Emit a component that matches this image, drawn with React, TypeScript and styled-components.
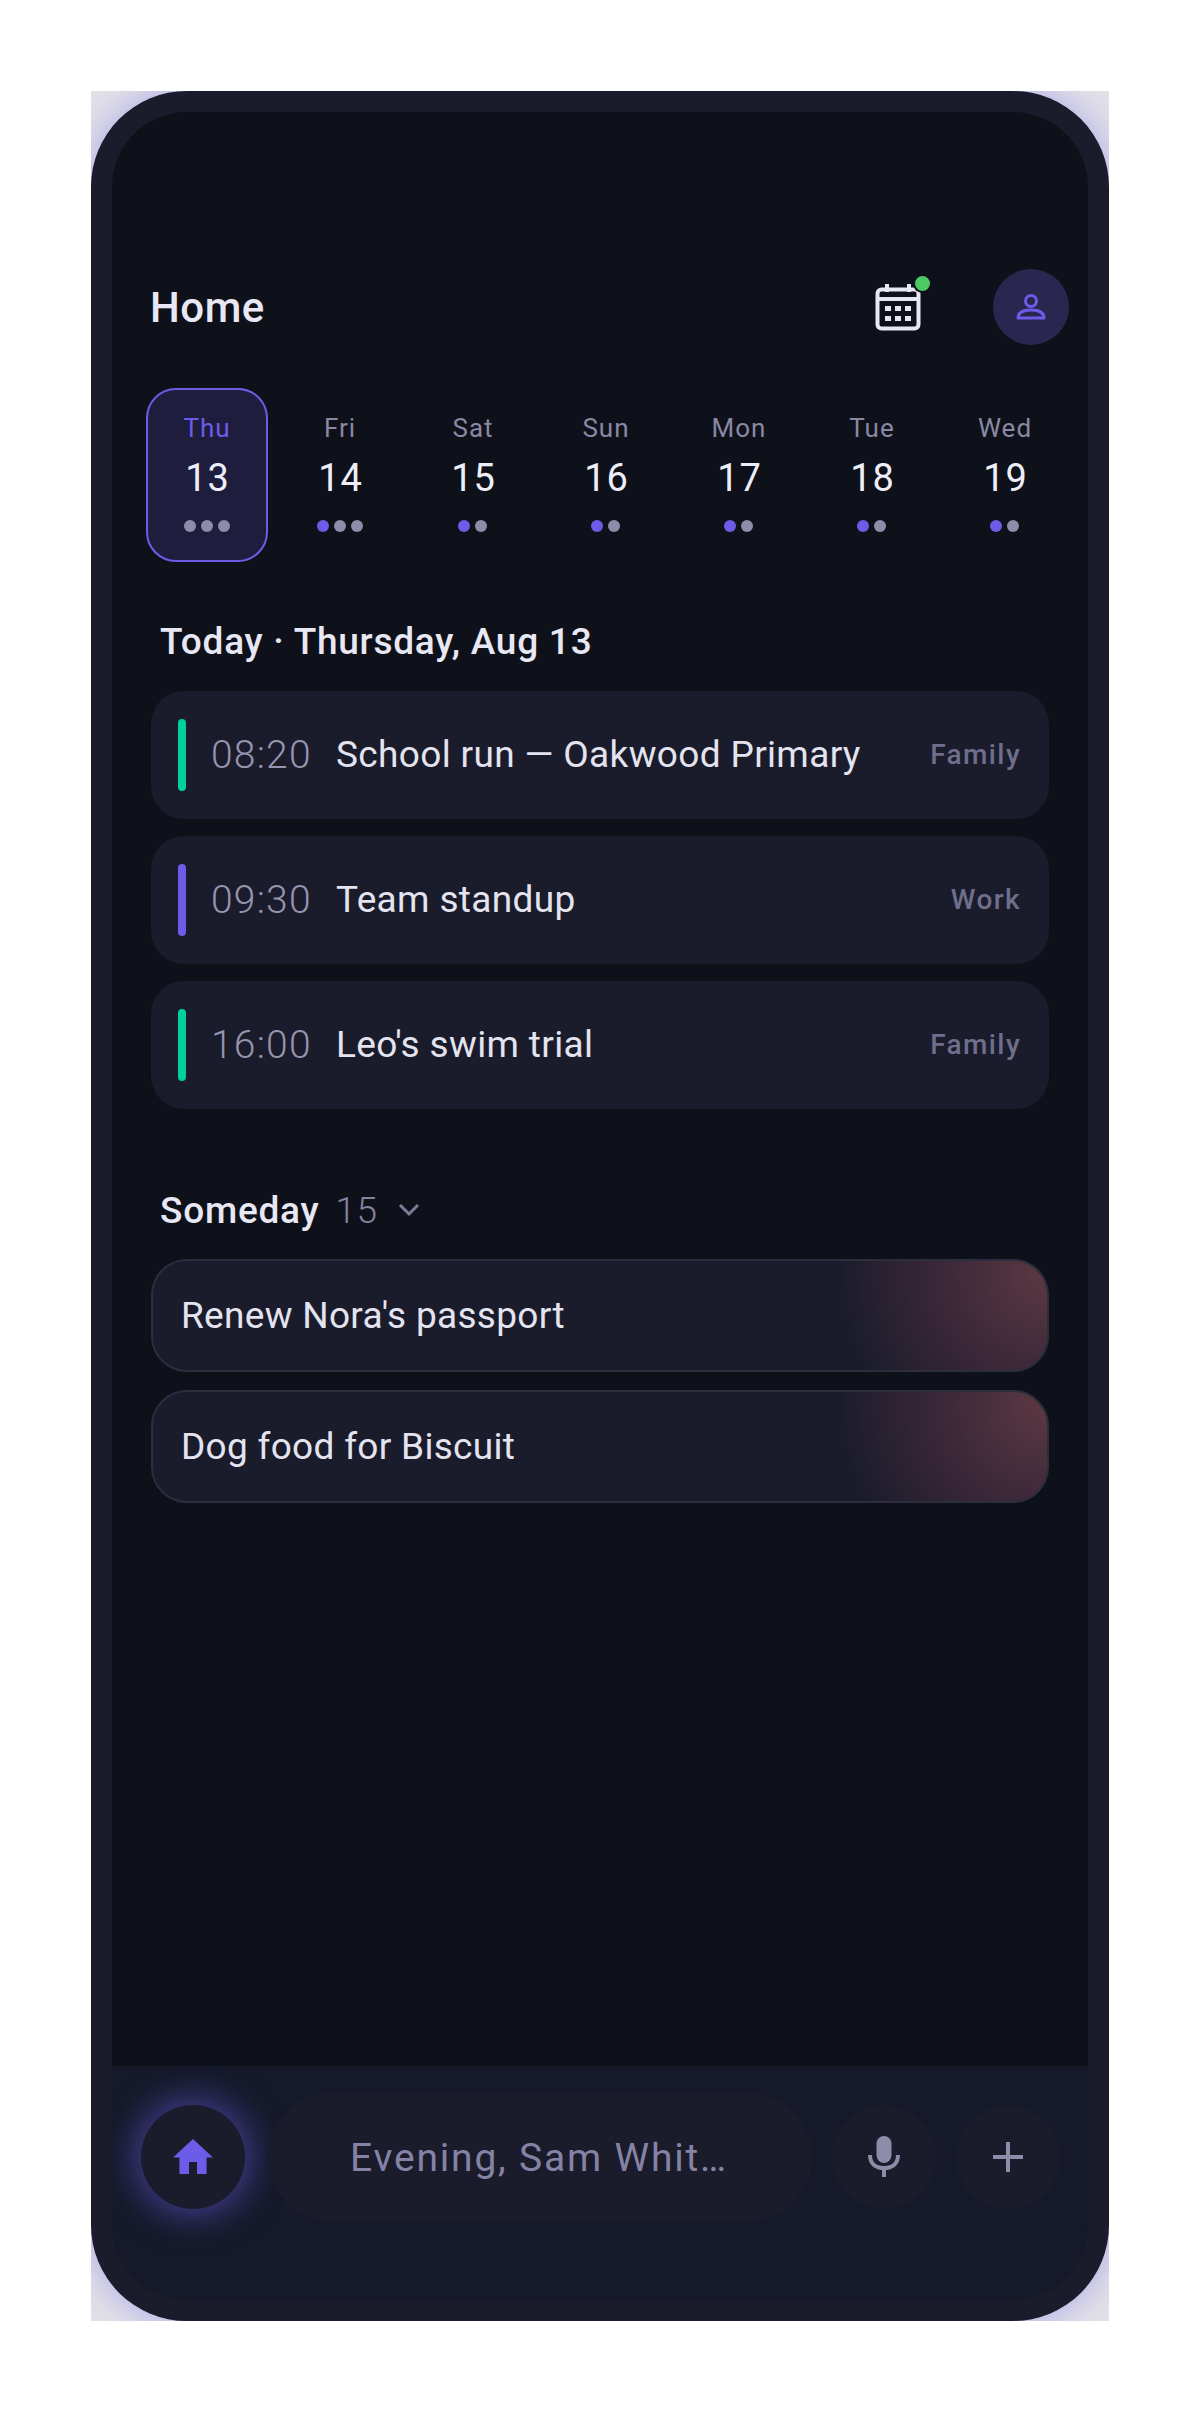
import styled, { createGlobalStyle } from 'styled-components';

const GlobalStyle = createGlobalStyle`
    html, body {
        margin: 0;
        padding: 0;
        background: #ffffff;
    }
    * {
        box-sizing: border-box;
    }
`

const Page = styled.div`
    width: 1200px;
    height: 2413px;
    padding: 91px 91px 92px;
    font-family: Roboto, "Liberation Sans", sans-serif;
`
const Frame = styled.div`
    width: 1018px;
    height: 2230px;
    background: #e2e2e8;
    overflow: hidden;
`
const Bezel = styled.div`
    width: 100%;
    height: 100%;
    padding: 21px;
    border-radius: 96px;
    background: #1a1c2b;
    box-shadow: 0 0 36px 0 rgba(108, 92, 231, 0.45);
`
const Screen = styled.div`
    display: flex;
    flex-direction: column;
    height: 100%;
    border-radius: 75px;
    overflow: hidden;
    background: #0f111a;
`
const Header = styled.header`
    display: flex;
    align-items: center;
    height: 76px;
    margin-top: 157px;
    padding: 0 19px 0 38px;
`
const Title = styled.h1`
    flex: 1;
    margin: 0;
    font-size: 42px;
    font-weight: 500;
    letter-spacing: 0.5px;
    color: #e8e8f4;
`
const CalendarButton = styled.div`
    position: relative;
    width: 46px;
    height: 48px;
    margin-right: 72px;
    color: #e8e8f4;
`
const Badge = styled.span`
    position: absolute;
    top: -7px;
    right: -9px;
    width: 15px;
    height: 15px;
    border-radius: 50%;
    background: #4cc864;
    box-shadow: 0 0 0 2px #0f111a;
`
const Avatar = styled.div`
    display: grid;
    place-items: center;
    width: 76px;
    height: 76px;
    border-radius: 50%;
    background: #2a2650;
    color: #6c5ce7;
`
const Days = styled.div`
    display: grid;
    grid-template-columns: repeat(7, 133px);
    margin: 43px 0 0 28px;
`
const Day = styled.div<{ $active?: boolean }>`
    display: flex;
    flex-direction: column;
    align-items: center;
    width: 122px;
    height: 174px;
    justify-self: center;
    border-radius: 30px;
    border: 2px solid ${p => (p.$active ? '#6c5ce7' : 'transparent')};
    background: ${p => (p.$active ? '#1f1d3e' : 'transparent')};
`
const DayName = styled.div<{ $active?: boolean }>`
    margin-top: 23px;
    padding-left: 1px;
    height: 30px;
    line-height: 30px;
    font-size: 26px;
    letter-spacing: 1px;
    color: ${p => (p.$active ? '#6c5ce7' : '#8a88a3')};
`
const DayNum = styled.div`
    margin-top: 12px;
    padding-left: 2px;
    height: 46px;
    line-height: 46px;
    font-size: 38px;
    letter-spacing: 1px;
    color: #eeeef8;
`
const Dots = styled.div`
    display: flex;
    gap: 5px;
    margin-top: 19px;
`
const Dot = styled.span<{ $on?: boolean }>`
    width: 12px;
    height: 12px;
    border-radius: 50%;
    background: ${p => (p.$on ? '#6c5ce7' : '#8e8ca8')};
`
const SectionTitle = styled.h2<{ $top: number }>`
    display: flex;
    align-items: center;
    height: 44px;
    margin: ${p => p.$top}px 0 0 48px;
    font-size: 37px;
    font-weight: 500;
    letter-spacing: 0.75px;
    color: #e8e8f4;
`
const List = styled.div<{ $gap: number; $top: number }>`
    display: flex;
    flex-direction: column;
    gap: ${p => p.$gap}px;
    margin: ${p => p.$top}px 39px 0;
`
const EventCard = styled.div`
    display: flex;
    align-items: center;
    height: 128px;
    padding: 0 28px 0 27px;
    border-radius: 33px;
    background: #1a1c2b;
`
const Bar = styled.span<{ $color: string }>`
    width: 8px;
    height: 72px;
    border-radius: 4px;
    background: ${p => p.$color};
`
const Time = styled.span`
    width: 125px;
    margin-left: 25px;
    font-size: 39px;
    font-weight: 300;
    letter-spacing: 1.2px;
    color: #9694ae;
`
const EventName = styled.span`
    flex: 1;
    margin-bottom: 2px;
    font-size: 37px;
    letter-spacing: 0.35px;
    color: #e4e4f0;
`
const Tag = styled.span`
    margin-bottom: 2px;
    font-size: 28px;
    font-weight: 500;
    letter-spacing: 1.4px;
    color: #6f6e8c;
`
const Count = styled.span`
    margin-left: 16px;
    font-size: 37px;
    font-weight: 300;
    color: #85839f;
`
const Chevron = styled.svg`
    margin-left: 20px;
    color: #7d7b98;
`
const Pill = styled.div`
    display: flex;
    align-items: center;
    height: 113px;
    padding-left: 28px;
    border: 2px solid #2c2e3d;
    border-radius: 36px;
    background:
        radial-gradient(ellipse 210px 200px at 100% 12%, #5c3843 0%, rgba(66, 42, 58, 0.85) 50%, rgba(26, 28, 43, 0) 100%),
        #1a1c2b;
    font-size: 37px;
    letter-spacing: 0.3px;
    color: #e4e4f0;
`
const BottomBar = styled.footer`
    display: flex;
    align-items: center;
    gap: 20px;
    height: 234px;
    margin-top: auto;
    padding: 26px 0 78px 29px;
    background: #151929;
`
const RoundButton = styled.div<{ $glow?: boolean }>`
    display: grid;
    place-items: center;
    flex: none;
    width: 104px;
    height: 104px;
    border-radius: 50%;
    background: #1a1c2b;
    color: ${p => (p.$glow ? '#6c5ce7' : '#8e8ca8')};
    box-shadow: ${p => (p.$glow ? '0 0 34px 8px rgba(108, 92, 231, 0.5)' : 'none')};
`
const Prompt = styled.div`
    display: grid;
    place-items: center;
    flex: none;
    width: 544px;
    height: 130px;
    margin-left: 3px;
    padding: 2px 2px 0 0;
    border-radius: 65px;
    background: #1a1c2b;
    font-size: 39px;
    letter-spacing: 1.8px;
    color: #8583a5;
`

const week = [
    { name: 'Thu', num: 13, dots: [false, false, false], active: true },
    { name: 'Fri', num: 14, dots: [true, false, false] },
    { name: 'Sat', num: 15, dots: [true, false] },
    { name: 'Sun', num: 16, dots: [true, false] },
    { name: 'Mon', num: 17, dots: [true, false] },
    { name: 'Tue', num: 18, dots: [true, false] },
    { name: 'Wed', num: 19, dots: [true, false] },
]

const events = [
    { time: '08:20', name: 'School run — Oakwood Primary', tag: 'Family', color: '#00cfa0' },
    { time: '09:30', name: 'Team standup', tag: 'Work', color: '#6c5ce7' },
    { time: '16:00', name: "Leo's swim trial", tag: 'Family', color: '#00cfa0' },
]

function App() {
    return (
        <Page>
            <GlobalStyle />
            <Frame>
                <Bezel>
                    <Screen>
                        <Header>
                            <Title>Home</Title>
                            <CalendarButton>
                                <svg width="46" height="48" viewBox="0 0 46 48" fill="none">
                                    <rect x="2.5" y="6.5" width="41" height="39" rx="4" stroke="currentColor" strokeWidth="4" />
                                    <path d="M2 16h42" stroke="currentColor" strokeWidth="4" />
                                    <path d="M12 1v8M34 1v8" stroke="currentColor" strokeWidth="4" />
                                    <path fill="currentColor" d="M10 23h6v5h-6zM20 23h6v5h-6zM30 23h6v5h-6zM10 33h6v5h-6zM20 33h6v5h-6zM30 33h6v5h-6z" />
                                </svg>
                                <Badge />
                            </CalendarButton>
                            <Avatar>
                                <svg width="32" height="32" viewBox="0 0 32 32" fill="none" stroke="currentColor" strokeWidth="3">
                                    <circle cx="16" cy="10" r="5.5" />
                                    <path d="M3 27c0-6 6-8 13-8s13 2 13 8z" strokeLinejoin="round" />
                                </svg>
                            </Avatar>
                        </Header>
                        <Days>
                            {week.map(d => (
                                <Day key={d.name} $active={d.active}>
                                    <DayName $active={d.active}>{d.name}</DayName>
                                    <DayNum>{d.num}</DayNum>
                                    <Dots>
                                        {d.dots.map((on, i) => <Dot key={i} $on={on} />)}
                                    </Dots>
                                </Day>
                            ))}
                        </Days>
                        <SectionTitle $top={57}>Today · Thursday, Aug 13</SectionTitle>
                        <List $gap={17} $top={28}>
                            {events.map(e => (
                                <EventCard key={e.time}>
                                    <Bar $color={e.color} />
                                    <Time>{e.time}</Time>
                                    <EventName>{e.name}</EventName>
                                    <Tag>{e.tag}</Tag>
                                </EventCard>
                            ))}
                        </List>
                        <SectionTitle $top={79}>
                            Someday
                            <Count>15</Count>
                            <Chevron width="22" height="14" viewBox="0 0 22 14" fill="none" stroke="currentColor" strokeWidth="3">
                                <path d="M2 2l9 9 9-9" />
                            </Chevron>
                        </SectionTitle>
                        <List $gap={18} $top={27}>
                            <Pill>Renew Nora's passport</Pill>
                            <Pill>Dog food for Biscuit</Pill>
                        </List>
                        <BottomBar>
                            <RoundButton $glow>
                                <svg width="48" height="48" viewBox="0 0 24 24" fill="currentColor">
                                    <path d="M10 20.5v-6h4v6h4.8v-8.300h3.200L12 3 2 12.200h3.200v8.300z" />
                                </svg>
                            </RoundButton>
                            <Prompt>Evening, Sam Whit…</Prompt>
                            <RoundButton>
                                <svg width="40" height="48" viewBox="0 0 40 48" fill="none">
                                    <rect x="12.500" y="3" width="15" height="27" rx="7.500" fill="currentColor" />
                                    <path d="M6 22c0 9 6 13 14 13s14-4 14-13M20 35v9" stroke="currentColor" strokeWidth="4" />
                                </svg>
                            </RoundButton>
                            <RoundButton>
                                <svg width="32" height="32" viewBox="0 0 32 32" stroke="currentColor" strokeWidth="4">
                                    <path d="M16 1v30M1 16h30" />
                                </svg>
                            </RoundButton>
                        </BottomBar>
                    </Screen>
                </Bezel>
            </Frame>
        </Page>
    )
}

export default App;
